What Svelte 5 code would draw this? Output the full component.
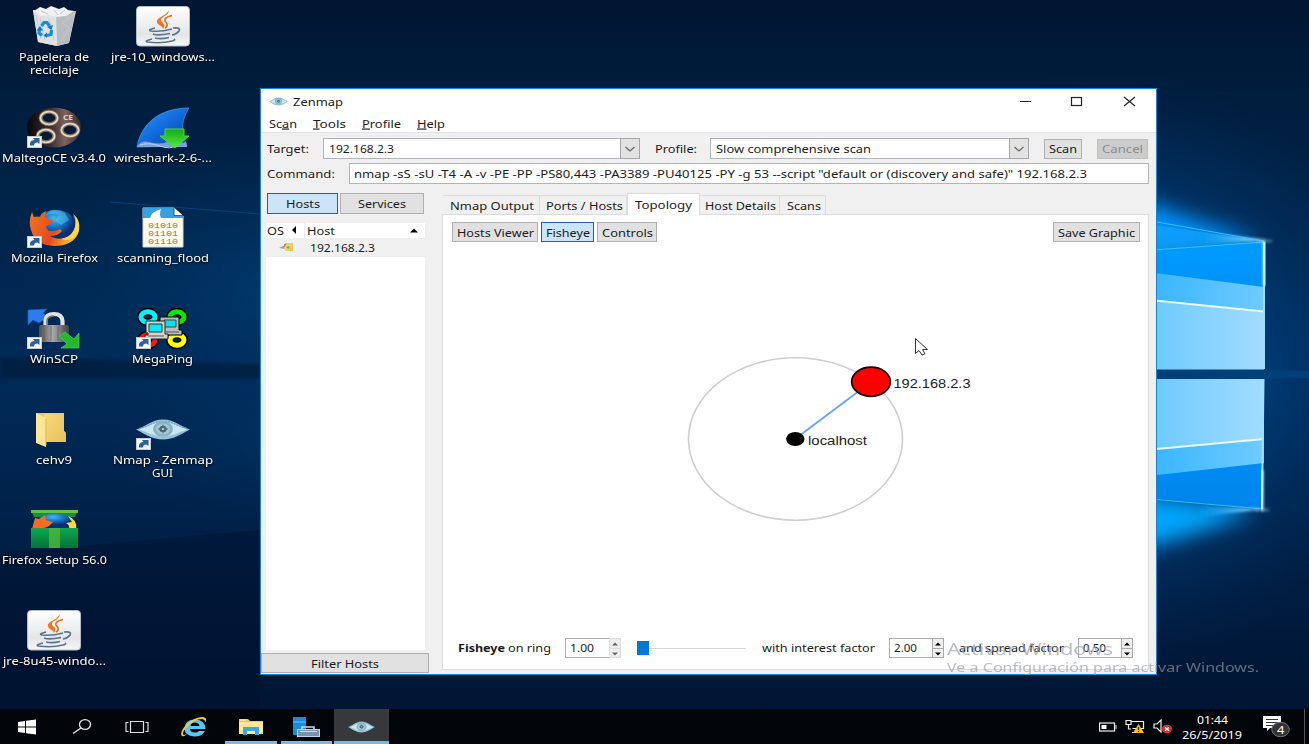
<script>
  const shortcuts = [
    { icon: 'bin', lines: [['Papelera de', 70], ['reciclaje', 49]] },
    { icon: 'java', lines: [['jre-10_windows...', 104]] },
    { icon: 'maltego', link: true, lines: [['MaltegoCE v3.4.0', 104]] },
    { icon: 'shark', lines: [['wireshark-2-6-...', 98]] },
    { icon: 'firefox', link: true, lines: [['Mozilla Firefox', 87]] },
    { icon: 'capture', lines: [['scanning_flood', 92]] },
    { icon: 'winscp', link: true, lines: [['WinSCP', 48]] },
    { icon: 'mega', link: true, lines: [['MegaPing', 61]] },
    { icon: 'folder', lines: [['cehv9', 36]] },
    { icon: 'eye', link: true, lines: [['Nmap - Zenmap', 100], ['GUI', 21]] },
    { icon: 'setup', lines: [['Firefox Setup 56.0', 105]] },
    null,
    { icon: 'java', lines: [['jre-8u45-windo...', 103]] }
  ];
  const menus = [['Sc', 'a', 'n', 28], ['', 'T', 'ools', 33], ['', 'P', 'rofile', 39], ['', 'H', 'elp', 28]];
  const tabs = [
    { name: 'Nmap Output', w: 84, box: 97 },
    { name: 'Ports / Hosts', w: 77, box: 87 },
    { name: 'Topology', w: 57, box: 73, active: true },
    { name: 'Host Details', w: 71, box: 80 },
    { name: 'Scans', w: 34, box: 46 }
  ];
</script>

{#snippet t(text, w)}
  <svg class="t" width={w} height="13"><text x="0" y="10.5" textLength={w} lengthAdjust="spacingAndGlyphs">{text}</text></svg>
{/snippet}

{#snippet eye()}
  <path d="M0 11C9 9 15 1 27 1S46 9 54 11C46 15 38 21 27 21S8 15 0 11Z" fill="#93c3d8" />
  <path d="M3 11C14 8 17 3 27 3S42 8 51 11C42 14 36 18 27 18S12 14 3 11Z" fill="#cbe7f1" />
  <path d="M3 10C13 8 17 3 27 3S41 8 51 10" fill="none" stroke="#6ba6c0" stroke-width="1.2" stroke-dasharray="2 1" />
  <ellipse cx="27" cy="10.5" rx="10" ry="7.8" fill="#86b4c6" />
  <ellipse cx="27" cy="10.5" rx="7" ry="5.5" fill="#a5c7d2" />
  <ellipse cx="27" cy="10.5" rx="3.6" ry="3.2" fill="#4c6575" />
  <path d="M27 6V15M22 10.5H32" stroke="#4c7183" />
  <ellipse cx="27" cy="10.5" rx="1.2" ry="1.1" fill="#c0d8df" />
{/snippet}

{#snippet fox()}
  <ellipse cx="29" cy="20" rx="21" ry="17" fill="url(#globe)" />
  <path d="M18 9Q24 5 32 8L28 14L34 18L42 13L38 6Q31 2 24 3Z" fill="#5ec5ef" opacity=".5" />
  <path d="M5 5L7 10Q10 9 13 10Q14 6 19 4L18 10Q21 13 26 13L25 16L19 19Q19 22 22 24Q30 24 33 22L35 24Q31 29 23 29Q33 35 43 28Q50 22 48 12L46 8Q55 17 51 27Q45 39 27 39Q8 38 4 23Q1 14 5 5Z" fill="url(#fire)" />
  <path d="M46 7Q51 13 47 23Q43 31 34 32Q45 36 51 25Q55 14 46 7Z" fill="#ffda4c" />
{/snippet}

{#snippet art(name)}
  {#if name === 'bin'}
    <path d="M6 4L20 6L49 5L42 37L30 40L11 36Z" fill="#dadbdc" />
    <path d="M28 9L48 5L42 37L30 40Z" fill="#b8bdbf" />
    <path d="M6 4L29 8L30 40L11 36Z" fill="#dfe1e2" />
    <path d="M7 5L13 1L19 3L24 0L32 3L37 1L41 4L47 5L39 10L29 11L22 9L14 10Z" fill="#f0f0f0" />
    <path d="M14 5L21 8M27 4L31 9M38 4L33 8M9 9L14 33M46 9L35 17L43 22L34 35M13 12L18 34M22 13L27 34M38 10L43 14" stroke="#c3c8ca" fill="none" />
    <path d="M14.500 20L17 16.500L20 16.500L22.500 20M24.500 24L24 28.500L19.500 29.500M15 29.500L12 27L12.500 23" stroke="#168ddf" stroke-width="3.200" fill="none" />
    <path d="M20 21L26 19L24.500 24ZM20 26.500V32L16.500 29.500ZM9.500 24.500L13 20L16 24.500Z" fill="#087bd0" />
  {:else if name === 'java'}
    <rect x=".5" y=".5" width="53" height="39.5" rx="3.5" fill="url(#tile)" stroke="#b6bdc8" />
    <path d="M32 4C33 9 20 11 21 16C21 19 27 20 27 23C31 17 25 17 25 14C25 10 35 9 32 4Z" fill="#ee7622" />
    <path d="M36 9.500C30 11 28 13 29 15C32 18 32 20 29 22" fill="none" stroke="#e96620" stroke-width="1.6" />
    <g fill="none" stroke="#58778f" stroke-width="1.7">
      <path d="M19 22Q11 24 15 25Q25 26 36 23M17 28Q22 30 34 27.500M19 32Q25 33.500 33 31.500M37 22Q45 21 43 25Q41 28 36 29" />
      <path d="M16 33Q8 35 11 36Q25 38 36 35Q40 34 38 33" stroke-width="1.6" />
    </g>
  {:else if name === 'maltego'}
    <ellipse cx="27" cy="20.5" rx="27" ry="20" fill="url(#button)" />
    {#each [[22, 11], [43, 23], [19, 29]] as [x, y]}
      <ellipse cx={x} cy={y} rx="8.2" ry="6.2" fill="#071c33" stroke="#7b6b61" stroke-width="4" />
      <ellipse cx={x} cy={y} rx="8.6" ry="6.4" fill="none" stroke="#e2d9c4" stroke-width="1.9" />
    {/each}
    <text x="36" y="13" font-size="7.5" font-weight="700" fill="#d9d2ce" textLength="10" lengthAdjust="spacingAndGlyphs">CE</text>
  {:else if name === 'shark'}
    <path d="M1 40C5 17 23 1 53 1C46 12 44 22 51 39Z" fill="url(#fin)" stroke="#4b9cf0" stroke-width=".7" />
    <path d="M1 40Q5 33 13 35Q24 38 31 35Q42 37 50 35L51 40Z" fill="#7ba1dc" />
    <path d="M4 38Q14 35 24 39T42 38" fill="none" stroke="#b9d0f0" />
    <path d="M29 22H48V29H53L39 41L24 29H29Z" fill="url(#green)" stroke="#52d639" />
  {:else if name === 'firefox'}
    {@render fox()}
  {:else if name === 'capture'}
    <path d="M7 1H38L47 9V40H7Z" fill="#fffced" stroke="#d8d5c8" />
    <path d="M7 1H38V9H47V11H7Z" fill="#35a1e0" />
    <path d="M14 11Q15 5 25 2Q23 7 25 11ZM38 1V9H47Z" fill="#fff" />
    <path d="M38 1V8.500H47" fill="none" stroke="#333" stroke-width=".8" />
    <g class="digits"><text x="12" y="21" textLength="30" lengthAdjust="spacingAndGlyphs">01010</text><text x="12" y="29" textLength="30" lengthAdjust="spacingAndGlyphs">01101</text><text x="12" y="37" textLength="30" lengthAdjust="spacingAndGlyphs">01110</text></g>
  {:else if name === 'winscp'}
    <path d="M1 2L20 1L16 5L21 9L12 15L6 12L1 17Z" fill="#2d7cef" stroke="#185abc" stroke-width=".7" />
    <path d="M18.500 19V12Q19 6 27 6Q35 6 35.500 13V19" fill="none" stroke="#e2e2e2" stroke-width="4.2" />
    <path d="M20 19V12Q21 8 27 8" fill="none" stroke="#777" stroke-width="1.5" />
    <rect x="12" y="17" width="30" height="17" rx="2" fill="url(#lock)" />
    <path d="M17 18V33M24 18V33M31 18V33M37 18V33" stroke="#555" opacity=".6" />
    <path d="M32 28L38 24L47 31L52 25V40H34L40 36Z" fill="#25b72d" stroke="#48d44d" stroke-width=".7" />
  {:else if name === 'mega'}
    {#each [[12, 9, '#00f4fa'], [41, 9, '#00ed00'], [12, 32, '#f11919'], [41, 32, '#ffff00']] as [x, y, c]}
      <ellipse cx={x} cy={y} rx="7" ry="5.3" fill="none" stroke="#000" stroke-width="8" />
      <ellipse cx={x} cy={y} rx="7" ry="5.3" fill="none" stroke={c} stroke-width="5" />
    {/each}
    <path d="M24 9H43V22H46V27H27L24 23Z" fill="#b9bdbe" stroke="#000" />
    <path d="M28 12H40V19H28Z" fill="#04e4ea" stroke="#444" />
    <path d="M10 13H29V26H32V31H9V27H12V25H10Z" fill="#d4d4d4" stroke="#222" />
    <path d="M13 16H26V24H13Z" fill="#00eef4" stroke="#333" />
    <path d="M12 28H28M30 24H43" stroke="#555" />
  {:else if name === 'folder'}
    <path d="M9 4H37V22L39 24V33H15L9 31Z" fill="#e9c867" />
    <path d="M17 5H37V22L39 24V33H17Z" fill="url(#paper)" />
    <path d="M9 4L19 9V38L9 34Z" fill="#ffe397" />
    <path d="M19 10V36" stroke="#d9b65a" />
  {:else if name === 'eye'}
    <g transform="translate(0,9.500)">{@render eye()}</g>
  {:else if name === 'setup'}
    <path d="M4 1H51L48 8H7Z" fill="#0d9148" />
    <path d="M4 1H51V4H4Z" fill="#62c043" />
    <path d="M7 20Q9 5 28 4Q47 5 49 20Z" fill="url(#globe)" />
    <path d="M5 20L8 9L12 10L18 6L19 11L26 13L22 17L15 20Z" fill="#f26e24" />
    <path d="M41 7Q51 11 49 20H42Q43 16 39 14L45 13Z" fill="#ffd83e" />
    <rect x="4" y="19" width="47" height="20" fill="url(#box)" />
    <rect x="22" y="19" width="11" height="20" fill="#54b83a" opacity=".75" />
  {/if}
{/snippet}

{#snippet arrows(dim)}
  <span class="steps" class:dim>
    <svg width="12" height="10"><path d="M3 6.5L6 3.5L9 6.5Z" /></svg>
    <svg width="12" height="10"><path d="M3 3.5L6 6.5L9 3.5Z" /></svg>
  </span>
{/snippet}

{#snippet drop()}
  <span class="drop"><svg width="19" height="20"><path d="M4.500 8L9 12L13.500 8" fill="none" stroke="#666" stroke-width="1.2" /></svg></span>
{/snippet}

<div class="screen">
  <svg class="wallpaper" width="1309" height="744">
    <defs>
      <linearGradient id="sky" x2="0" y2="1"><stop stop-color="#001632" /><stop offset=".25" stop-color="#002348" /><stop offset=".5" stop-color="#002b59" /><stop offset=".8" stop-color="#001c40" /><stop offset="1" stop-color="#00132f" /></linearGradient>
      <radialGradient id="halo"><stop stop-color="#0078d8" /><stop offset=".5" stop-color="#00509a" stop-opacity=".65" /><stop offset="1" stop-color="#003467" stop-opacity="0" /></radialGradient>
      <radialGradient id="left"><stop stop-color="#004078" stop-opacity=".75" /><stop offset="1" stop-color="#003061" stop-opacity="0" /></radialGradient>
      <linearGradient id="pane"><stop stop-color="#66c8fd" /><stop offset="1" stop-color="#a2dcff" /></linearGradient>
      <linearGradient id="pane2"><stop stop-color="#32b3ff" /><stop offset="1" stop-color="#70cbff" /></linearGradient>
      <linearGradient id="deep" x2="0" y2="1"><stop stop-color="#009bff" /><stop offset="1" stop-color="#0084ec" /></linearGradient>
      <linearGradient id="ray"><stop stop-color="#00a2ff" stop-opacity=".2" /><stop offset=".65" stop-color="#52c2ff" /><stop offset="1" stop-color="#f3ffff" /></linearGradient>
      <filter id="soft" x="-30%" y="-50%" width="160%" height="200%"><feGaussianBlur stdDeviation="10" /></filter>
      <filter id="fine" x="-30%" y="-30%" width="160%" height="160%"><feGaussianBlur stdDeviation="1.4" /></filter>
      <radialGradient id="globe" cx=".45" cy=".25"><stop stop-color="#43baf0" /><stop offset=".5" stop-color="#1877c1" /><stop offset="1" stop-color="#0a2e73" /></radialGradient>
      <linearGradient id="fire" x2="1" y2=".3"><stop stop-color="#f07824" /><stop offset=".6" stop-color="#e6491d" /><stop offset="1" stop-color="#ffbd2e" /></linearGradient>
      <linearGradient id="tile" x2="0" y2="1"><stop stop-color="#fff" /><stop offset=".7" stop-color="#e4e5e6" /><stop offset="1" stop-color="#f7f7f7" /></linearGradient>
      <linearGradient id="button"><stop stop-color="#050507" /><stop offset=".45" stop-color="#3d2f30" /><stop offset=".7" stop-color="#7d6260" /><stop offset="1" stop-color="#3d2825" /></linearGradient>
      <linearGradient id="fin" x2="1" y2="1"><stop stop-color="#3598f4" /><stop offset=".45" stop-color="#126fe0" /><stop offset="1" stop-color="#073b9a" /></linearGradient>
      <linearGradient id="green" x2="0" y2="1"><stop stop-color="#13aa1c" /><stop offset="1" stop-color="#55ed3e" /></linearGradient>
      <linearGradient id="lock"><stop stop-color="#4d4d4d" /><stop offset=".45" stop-color="#aaa" /><stop offset="1" stop-color="#3f4343" /></linearGradient>
      <linearGradient id="paper" x2="1" y2="1"><stop stop-color="#f9d978" /><stop offset="1" stop-color="#e7c05f" /></linearGradient>
      <linearGradient id="box" x2="0" y2="1"><stop stop-color="#10a650" /><stop offset="1" stop-color="#037335" /></linearGradient>
    </defs>
    <rect width="1309" height="744" fill="url(#sky)" />
    <ellipse cx="300" cy="290" rx="300" ry="150" fill="url(#left)" />
    <ellipse cx="290" cy="440" rx="190" ry="90" fill="url(#left)" opacity=".55" />
    <path d="M0 357L260 364V379H0Z" fill="#00152f" opacity=".5" filter="url(#fine)" />
    <path d="M0 553L260 530V709H0Z" fill="#00102b" opacity=".4" />
    <path d="M110 202L260 214" stroke="#115294" opacity=".55" />
    <ellipse cx="1110" cy="370" rx="290" ry="300" fill="url(#halo)" opacity=".72" />
    <path d="M1110 190Q1180 215 1258 240L1120 262Z" fill="#0093ff" filter="url(#soft)" />
    <path d="M1110 490L1256 511Q1190 538 1110 556Z" fill="#00a6ff" filter="url(#soft)" />
    <path d="M1100 217L1264 241L1100 255Z" fill="#17a7ff" opacity=".55" />
    <path d="M1140 251L1264 241V371H1140Z" fill="url(#deep)" />
    <path d="M1140 271L1264 287V371H1140Z" fill="url(#pane2)" />
    <path d="M1140 299L1264 311V371H1140Z" fill="url(#pane)" />
    <path d="M1140 369.500H1264L1309 371V378L1264 379H1140Z" fill="#004078" />
    <path d="M1140 379H1264L1262 509L1140 497Z" fill="url(#deep)" />
    <path d="M1140 379H1264V463L1140 477Z" fill="url(#pane2)" />
    <path d="M1140 379H1264V439L1140 450Z" fill="url(#pane)" />
    <path d="M1140 299L1264 311.500M1140 450.500L1264 439" stroke="#e9f9ff" stroke-width="1.8" />
    <path d="M1196 231L1267 240L1196 244ZM1200 517L1264 509L1200 506Z" fill="url(#ray)" filter="url(#fine)" />
    <path d="M1140 219L1264 241M1140 251L1264 242M1140 498L1262 509" fill="none" stroke="#42c0ff" stroke-width=".9" />
    <path d="M1264 242V369M1263.500 379L1262 509" fill="none" stroke="#9ce0fc" stroke-width="2" />
    <path d="M1264.500 241V286M1262 470V511" stroke="#dffaff" stroke-width="2.500" filter="url(#fine)" />
    <path d="M1257 241H1272M1255 510H1269" stroke="#b7eaff" filter="url(#fine)" />
  </svg>

  <main class="desktop">
    {#each shortcuts as s}
      <div class="shortcut">
        {#if s}
          <svg width="54" height="42" viewBox="0 0 54 42">
            {@render art(s.icon)}
            {#if s.link}
              <rect x=".5" y="29.5" width="14" height="11" fill="#f5f5f5" stroke="#c9cdd2" />
              <path d="M3 38.500V36Q4 33 7.500 33L6 31H12.500V37L10.500 35.500Q7 35.500 7 38.500Z" fill="#2c609f" />
            {/if}
          </svg>
          <div class="caption">{#each s.lines as [text, w]}{@render t(text, w)}{/each}</div>
        {/if}
      </div>
    {/each}
  </main>

  <section class="window">
    <header class="title">
      <svg width="19" height="9" viewBox="0 0 54 22" preserveAspectRatio="none">{@render eye()}</svg>
      {@render t('Zenmap', 50)}
      <svg class="controls" width="118" height="14">
        <g fill="none" stroke="#222" stroke-width="1.2"><path d="M1 7.5H12M105 3L116 12M116 3L105 12" /><rect x="52.5" y="3.5" width="10" height="8" /></g>
      </svg>
    </header>
    <nav class="menu">
      {#each menus as [a, k, b, w]}
        <svg class="t" width={w} height="14"><text x="0" y="10.5" textLength={w} lengthAdjust="spacingAndGlyphs">{a}<tspan text-decoration="underline">{k}</tspan>{b}</text></svg>
      {/each}
    </nav>
    <div class="row target">
      <span class="label a">{@render t('Target:', 42)}</span>
      <div class="field combo one">{@render t('192.168.2.3', 65)}{@render drop()}</div>
      <span class="label b">{@render t('Profile:', 42)}</span>
      <div class="field combo two">{@render t('Slow comprehensive scan', 155)}{@render drop()}</div>
      <button class="scan">{@render t('Scan', 28)}</button>
      <button class="cancel">{@render t('Cancel', 41)}</button>
    </div>
    <div class="row command">
      <span class="label c">{@render t('Command:', 68)}</span>
      <div class="field cmd">{@render t('nmap -sS -sU -T4 -A -v -PE -PP -PS80,443 -PA3389 -PU40125 -PY -g 53 --script "default or (discovery and safe)" 192.168.2.3', 733)}</div>
    </div>
    <div class="body">
      <aside>
        <div class="switch">
          <button class="on hosts">{@render t('Hosts', 34)}</button>
          <button class="services">{@render t('Services', 48)}</button>
        </div>
        <div class="tree">
          <div class="head">
            <span class="os">{@render t('OS', 17)}<svg width="8" height="9"><path d="M6 0V8L2 4Z" /></svg></span>
            <span class="host">{@render t('Host', 28)}<svg width="10" height="6"><path d="M1 4.500L5 .5L9 4.500Z" /></svg></span>
          </div>
          <div class="entry">
            <svg width="16" height="11"><path d="M0 6L6 3V7Z" fill="#92a4a8" /><path d="M5 2L10 1L11 6L6 6Z" fill="#e6603b" /><path d="M8 1H14V9H7L5 6Z" fill="#f4d44e" /><path d="M7 5L10 4L11 6L9 7Z" fill="#65bd73" /><path d="M11 4H14V9H9Z" fill="#f0bf67" opacity=".7" /></svg>
            {@render t('192.168.2.3', 65)}
          </div>
        </div>
        <button class="filter">{@render t('Filter Hosts', 68)}</button>
      </aside>
      <div class="book">
        <div class="tabs">
          {#each tabs as tab}
            <div class="tab" class:active={tab.active} style:width="{tab.box}px">{@render t(tab.name, tab.w)}</div>
          {/each}
        </div>
        <div class="page">
          <div class="tools">
            <button class="viewer">{@render t('Hosts Viewer', 77)}</button>
            <button class="on fish">{@render t('Fisheye', 44)}</button>
            <button class="ctl">{@render t('Controls', 51)}</button>
            <button class="save">{@render t('Save Graphic', 77)}</button>
          </div>
          <svg class="graph" width="705" height="390">
            <g transform="translate(-443,-245)">
              <ellipse cx="795.5" cy="439" rx="107" ry="81.2" fill="none" stroke="#cfcfcf" stroke-width="1.6" />
              <path d="M795 439L871 382" stroke="#5fa4ff" stroke-width="1.7" />
              <ellipse cx="871" cy="381.7" rx="19.3" ry="14.6" fill="#f00" stroke="#180000" stroke-width="1.7" />
              <ellipse cx="795.3" cy="439" rx="9.2" ry="7" />
              <g class="node"><text x="893.5" y="387.500" textLength="77" lengthAdjust="spacingAndGlyphs">192.168.2.3</text><text x="808" y="444.5" textLength="59" lengthAdjust="spacingAndGlyphs">localhost</text></g>
              <path d="M915.5 338.500V353.500L919 350.5L922 355L925 353.8L922.5 349.5H927.5Z" fill="#fff" stroke="#333" />
            </g>
          </svg>
          <div class="factors">
            <strong>{@render t('Fisheye', 47)}</strong>
            <span class="ring">{@render t('on ring', 43)}</span>
            <span class="spin first">{@render t('1.00', 24)}</span>{@render arrows(true)}
            <span class="slider"><i></i></span>
            <span class="interest">{@render t('with interest factor', 113)}</span>
            <span class="spin">{@render t('2.00', 23)}</span>{@render arrows(false)}
            <span class="spread">{@render t('and spread factor', 105)}</span>
            <span class="spin">{@render t('0.50', 23)}</span>{@render arrows(false)}
          </div>
        </div>
      </div>
    </div>
  </section>

  <svg class="watermark" width="330" height="40">
    <text class="big" x="1" y="17" textLength="166" lengthAdjust="spacingAndGlyphs">Activar Windows</text>
    <text x="1" y="34" textLength="312" lengthAdjust="spacingAndGlyphs">Ve a Configuración para activar Windows.</text>
  </svg>

  <footer class="taskbar">
    <div class="app"><svg width="20" height="16"><path d="M1 3L8 2V7.4H1ZM9 1.8L19 .5V7.4H9ZM1 8.4H8V14L1 13ZM9 8.4H19V15.5L9 14.2Z" fill="#fff" /></svg></div>
    <div class="app"><svg width="20" height="18"><ellipse cx="13" cy="6.5" rx="5.5" ry="4.8" fill="none" stroke="#e5e5e5" stroke-width="1.3" /><path d="M9 10L1 15.5" stroke="#e5e5e5" stroke-width="1.4" /></svg></div>
    <div class="app view"><svg width="24" height="14"><path d="M5.5 1.5H18.5V12.5H5.5ZM3.5 2.5H1V11.5H3.5M20.5 2.5H23V11.5H20.5" fill="none" stroke="#ddd" stroke-width="1.2" /></svg></div>
    <div class="app web"><svg width="28" height="22"><path d="M25.500 13H10Q10.500 16.500 15 16.500Q18 16.500 19 15H25Q22 20.500 14.500 20.500Q4.500 20 4.500 12Q5 3.500 15 3.500Q25.500 4 25.500 13ZM10.500 10H19.500Q19 6.500 15 6.500Q11 6.500 10.500 10Z" fill="#58c8f4" fill-rule="evenodd" /><path d="M2 20Q-1 17 6 9Q14 1 23 1Q28 2 25 7Q26 4 22 3Q14 3 6 12Q1 18 4 19L7 18Q4 21 2 20Z" fill="#fbc63f" /></svg></div>
    <div class="app open"><svg width="26" height="18"><path d="M1 1H10L12 3H25V16H1Z" fill="#f6c74f" /><path d="M1 4H25V16H1Z" fill="#ffe694" /><path d="M5 9H21V17H17V13H9V17H5Z" fill="#3ba8e5" /><path d="M2 2H8" stroke="#fff1bc" /></svg></div>
    <div class="app open"><svg width="28" height="22"><path d="M1 1H14V19H1Z" fill="#168be1" /><path d="M1 6H14" stroke="#71c2ff" /><path d="M10 14V11H22V14" fill="none" stroke="#c9dae8" stroke-width="1.6" /><rect x="5.5" y="13.5" width="22" height="7" fill="#7893a9" stroke="#c3d6e6" /><path d="M8 15.5H25" stroke="#d1e0eb" /></svg></div>
    <div class="app open current"><svg width="27" height="12" viewBox="0 0 54 22" preserveAspectRatio="none">{@render eye()}</svg></div>
    <div class="tray">
      <svg width="18" height="12"><rect x=".5" y="2" width="15" height="8" fill="none" stroke="#eee" stroke-width="1.2" /><rect x="2.5" y="4" width="5" height="4" fill="#fff" /><path d="M17 4V8" stroke="#eee" /></svg>
      <svg width="20" height="15"><path d="M6 2.5H18.5V9.5H7.5M12 9.5V13M7 13.5H14M1 1.5H6V5.5H1ZM3.5 5.5V10H6" fill="none" stroke="#eee" stroke-width="1.2" /><path d="M13.5 5L19 14H8Z" fill="#ffbd24" /><path d="M13.5 8V11M13.5 12V13" stroke="#222" stroke-width="1.3" /></svg>
      <svg width="20" height="15"><path d="M1 5H4L8 1V13L4 9H1Z" fill="none" stroke="#eee" stroke-width="1.2" /><ellipse cx="14" cy="10" rx="5" ry="4.2" fill="#e52c35" /><path d="M12 8.2L16 11.8M16 8.2L12 11.8" stroke="#fff" stroke-width="1.3" /></svg>
      <div class="clock">{@render t('01:44', 31)}{@render t('26/5/2019', 60)}</div>
      <svg class="notes" width="29" height="24"><path d="M1 1H19V13H8L5 16V13H1Z" fill="#fff" /><path d="M4 4.5H16M4 7.5H16M4 10.5H13" stroke="#333" /><ellipse cx="18.5" cy="14.5" rx="8.8" ry="7.2" fill="#303338" stroke="#777" /><text x="15" y="18.5" font-size="11" fill="#fff" textLength="7.5" lengthAdjust="spacingAndGlyphs">4</text></svg>
      <i class="peek"></i>
    </div>
  </footer>
</div>

<style>
  :global(body) { margin: 0; overflow: hidden; }
  .screen { position: relative; width: 1309px; height: 744px; overflow: hidden; background: #001b3d; font-family: "Noto Sans", "Open Sans", sans-serif; font-size: 11.3px; color: #1c1c1c; display: flex; flex-direction: column; }
  .screen * { box-sizing: border-box; }
  svg { display: block; flex: none; }
  .t { overflow: visible; fill: currentColor; }
  .wallpaper { position: absolute; inset: 0; }
  .desktop { position: relative; flex: 1; display: grid; grid-template-columns: 108px 109px; grid-auto-rows: 100.7px; padding-top: 6px; align-content: start; min-height: 0; }
  .shortcut { display: flex; flex-direction: column; align-items: center; gap: 2px; }
  .caption { display: flex; flex-direction: column; align-items: center; color: #fff; filter: drop-shadow(0 1px 1px #000); }
  .digits { font: 7.5px "Liberation Mono", monospace; fill: #77776c; }
  .window { position: absolute; left: 260px; top: 88px; width: 897px; height: 587px; background: #f0f0f0; border: 1px solid #1784d9; display: flex; flex-direction: column; }
  .title { height: 24px; background: #fff; display: flex; align-items: center; padding-left: 8px; gap: 5px; }
  .title .controls { margin-left: auto; margin-right: 19px; }
  .menu { height: 20px; background: #fff; border-bottom: 1px solid #e3e3e3; display: flex; gap: 16px; padding: 4px 0 0 8px; }
  .row { display: flex; padding-left: 6px; align-items: center; }
  .target { height: 21px; margin-top: 5px; }
  .command { height: 21px; margin-top: 4px; }
  .label.a { width: 56px; } .label.b { width: 70px; padding-left: 15px; } .label.c { width: 82px; }
  .field { background: #fff; border: 1px solid #b3b4b9; display: flex; align-items: center; justify-content: space-between; padding-left: 5px; height: 21px; }
  .one { width: 317px; } .two { width: 319px; } .cmd { width: 800px; padding-left: 4px; }
  .drop { width: 20px; height: 21px; margin-right: -1px; background: #e2e2e2; border: 1px solid #a5a6aa; }
  button { font: inherit; color: inherit; background: #e1e1e1; border: 1px solid #b0b0b0; padding: 0; height: 20px; display: flex; align-items: center; justify-content: center; }
  button.on { background: #cce4f7; border-color: #20619a; }
  .scan { width: 38px; margin-left: 15px; }
  .cancel { width: 51px; margin-left: 15px; background: #ccc; border-color: #c0c0c0; color: #8c8c8c; }
  .body { display: flex; flex: 1; min-height: 0; padding-top: 9px; }
  aside { width: 181px; display: flex; flex-direction: column; }
  .switch { display: flex; gap: 2px; padding-left: 6px; }
  .hosts { width: 71px; height: 21px; } .services { width: 84px; height: 21px; }
  .tree { margin: 9px 17px 3px 5px; height: 427px; background: #fff; display: flex; flex-direction: column; }
  .head { display: flex; height: 15px; }
  .os { width: 39px; display: flex; align-items: center; gap: 6px; padding-left: 1px; border-right: 1px solid #ececec; }
  .host { flex: 1; display: flex; align-items: center; justify-content: space-between; padding: 0 6px 0 2px; }
  .entry { height: 19px; background: #f0f0f0; display: flex; align-items: center; padding-left: 13px; gap: 15px; }
  .filter { width: 168px; }
  .book { width: 707px; height: 477px; display: flex; flex-direction: column; }
  .tabs { height: 21px; display: flex; align-items: flex-end; padding-left: 1px; }
  .tab { height: 19px; display: flex; align-items: center; justify-content: center; border: solid #dcdcdc; border-width: 1px 1px 0 0; padding-left: 2px; }
  .tab.active { height: 22px; margin-bottom: -1px; background: #fff; position: relative; border-left-width: 1px; padding: 0 0 1px; }
  .page { flex: 1; background: #fff; border: 1px solid #dcdcdc; display: flex; flex-direction: column; min-height: 0; }
  .tools { display: flex; gap: 3px; padding: 7px 8px 0 9px; height: 30px; }
  .viewer { width: 86px; } .fish { width: 53px; } .ctl { width: 60px; } .save { width: 87px; margin-left: auto; }
  .node { font: 12px "Liberation Sans", Arial, sans-serif; fill: #222; }
  .factors { display: flex; align-items: center; height: 21px; padding-left: 15px; margin-top: 2px; }
  .ring { margin-left: 3px; }
  .spin { width: 43px; height: 20px; border: 1px solid #adaeb5; border-right: 0; margin-left: 14px; display: flex; align-items: center; padding-left: 4px; }
  .spin.first { width: 44px; }
  .steps { width: 12px; height: 20px; border: 1px solid #aaa; background: #eee; display: flex; flex-direction: column; }
  .steps svg { height: 9px; margin-left: -1px; }
  .steps svg + svg { border-top: 1px solid #aaa; }
  .steps.dim { border-color: #ddd; fill: #666; }
  .steps.dim svg + svg { border-color: #ddd; }
  .slider { width: 109px; height: 14px; margin-left: 16px; background: linear-gradient(#d6d6d6, #d6d6d6) 0 7px / 100% 1px no-repeat; }
  .slider i { display: block; width: 12px; height: 14px; background: #0078d7; }
  .interest { margin-left: 16px; } .spread { margin-left: 15px; }
  .watermark { position: absolute; left: 946px; top: 638px; fill: #969ba2; opacity: .65; font-size: 12.5px; }
  .watermark .big { font-size: 16px; }
  .taskbar { position: relative; height: 35px; background: #020509; display: flex; color: #fff; }
  .app { width: 56px; display: flex; align-items: center; justify-content: center; }
  .app:first-child { width: 54px; }
  .view { width: 54px; }
  .web { width: 59px; }
  .open { border-bottom: 3px solid #000; border-image: linear-gradient(90deg, transparent 9%, #76b9ed 9%, #76b9ed 91%, transparent 91%) 3; padding-top: 3px; width: 55.5px; }
  .current { background: #36383c; width: 55px; border-image: none; border-bottom-color: #76b9ed; }
  .tray { margin-left: auto; display: flex; align-items: center; gap: 8px; padding-right: 4px; }
  .clock { width: 60px; margin-left: 1px; display: flex; flex-direction: column; align-items: center; gap: 2px; }
  .notes { margin-left: 12px; }
  .peek { width: 1px; height: 35px; background: #555; margin-left: 5px; }
</style>
